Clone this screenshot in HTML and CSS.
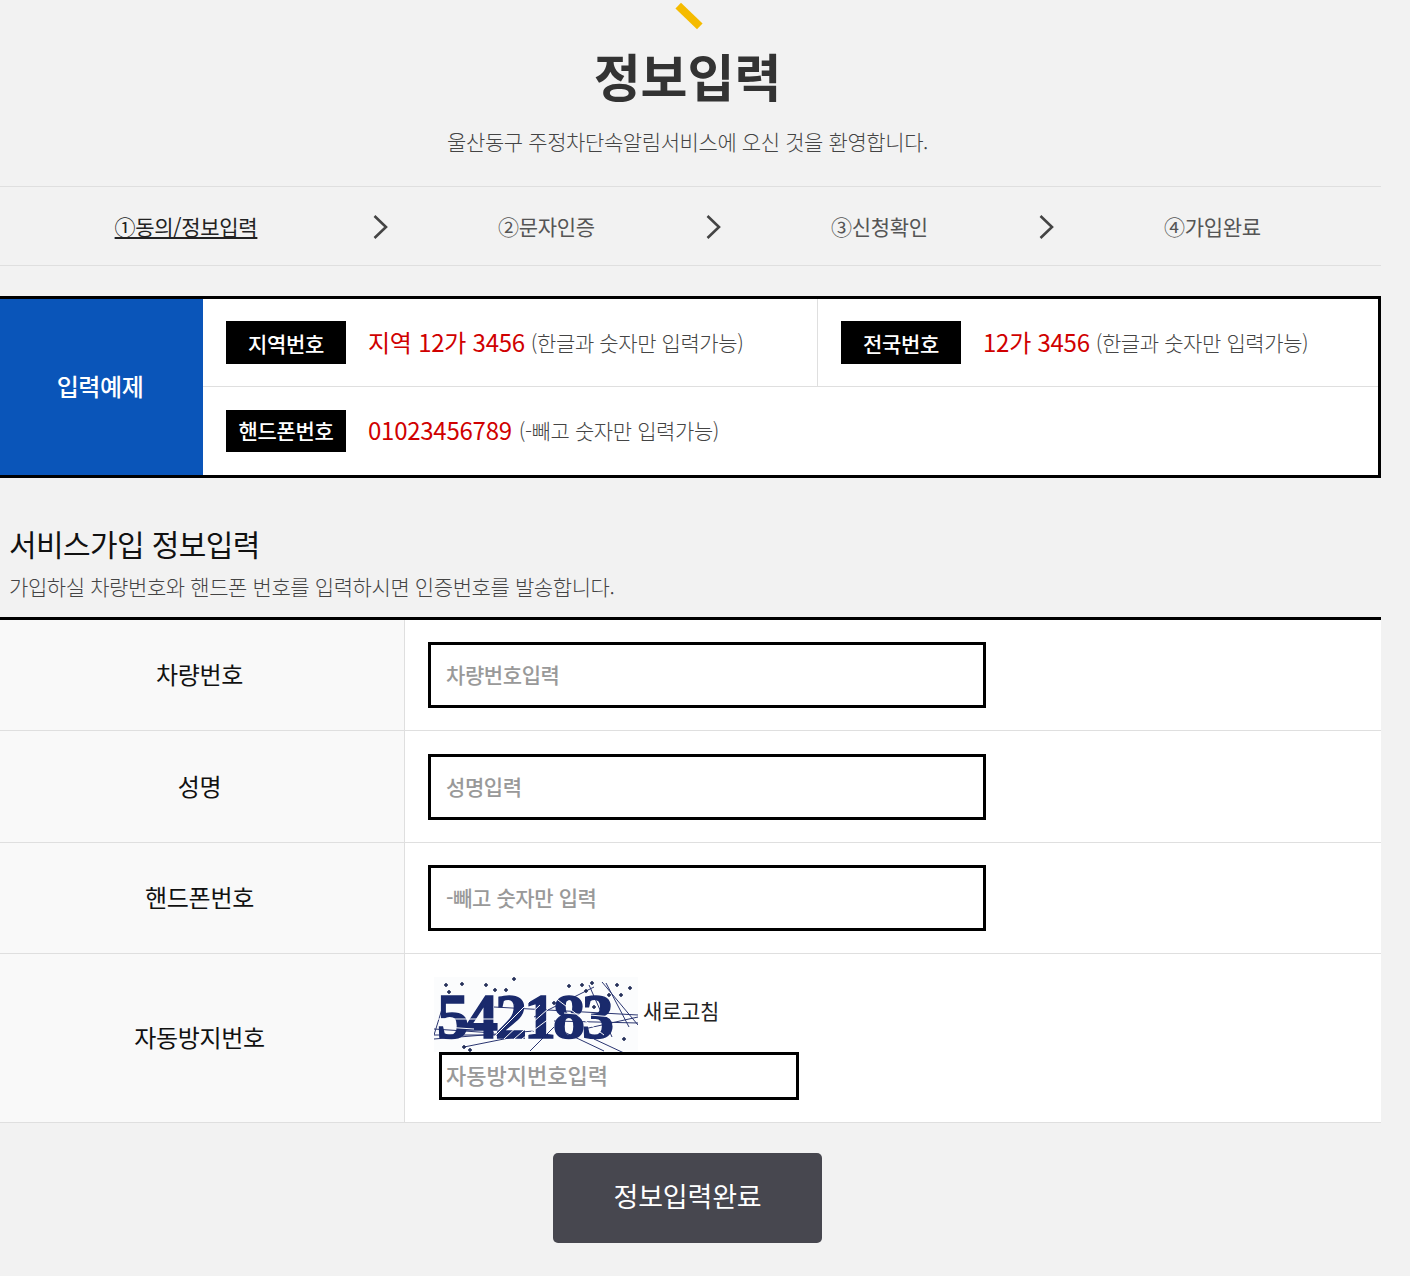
FILE: index.html
```html
<!DOCTYPE html>
<html lang="ko">
<head>
<meta charset="utf-8">
<title>정보입력</title>
<link rel="stylesheet" href="styles.css">
</head>
<body>
<main class="page">
  <header class="head">
    <span class="mark"></span>
    <h1 class="title">정보입력</h1>
    <p class="lead">울산동구 주정차단속알림서비스에 오신 것을 환영합니다.</p>
  </header>

  <nav class="steps">
    <a class="step step-on">①동의/정보입력</a>
    <svg class="chev" viewBox="0 0 16 26"><path d="M2.500 2 L14 13 L2.500 24"/></svg>
    <a class="step">②문자인증</a>
    <svg class="chev" viewBox="0 0 16 26"><path d="M2.500 2 L14 13 L2.500 24"/></svg>
    <a class="step">③신청확인</a>
    <svg class="chev" viewBox="0 0 16 26"><path d="M2.500 2 L14 13 L2.500 24"/></svg>
    <a class="step">④가입완료</a>
  </nav>

  <section class="example">
    <div class="ex-side">입력예제</div>
    <div class="ex-body">
      <div class="ex-row">
        <div class="ex-cell ex-cell-first">
          <span class="chip">지역번호</span>
          <span class="red">지역 12가 3456</span>
          <span class="note">(한글과 숫자만 입력가능)</span>
        </div>
        <div class="ex-cell">
          <span class="chip">전국번호</span>
          <span class="red">12가 3456</span>
          <span class="note">(한글과 숫자만 입력가능)</span>
        </div>
      </div>
      <div class="ex-row ex-row-last">
        <div class="ex-cell">
          <span class="chip">핸드폰번호</span>
          <span class="red">01023456789</span>
          <span class="note">(-빼고 숫자만 입력가능)</span>
        </div>
      </div>
    </div>
  </section>

  <h2 class="sec-title">서비스가입 정보입력</h2>
  <p class="sec-desc">가입하실 차량번호와 핸드폰 번호를 입력하시면 인증번호를 발송합니다.</p>

  <form class="form">
    <div class="f-row">
      <label class="f-label">차량번호</label>
      <div class="f-field"><input class="inp" type="text" placeholder="차량번호입력"></div>
    </div>
    <div class="f-row">
      <label class="f-label">성명</label>
      <div class="f-field"><input class="inp" type="text" placeholder="성명입력"></div>
    </div>
    <div class="f-row">
      <label class="f-label">핸드폰번호</label>
      <div class="f-field"><input class="inp" type="text" placeholder="-빼고 숫자만 입력"></div>
    </div>
    <div class="f-row f-row-cap">
      <label class="f-label">자동방지번호</label>
      <div class="f-field f-field-cap">
        <div class="cap-line">
          <svg class="captcha" viewBox="0 0 204 75">
            <rect width="204" height="75" fill="#fbfcfd"/>
            <g class="cap-lines">
              <path d="M0 58 H70 M0 52 L60 56 M0 62 L100 54 M8 32 L0 58 M100 40 L160 10 M168 5 L204 48 M155 8 L178 60 M172 6 L195 50 M60 30 L204 38 M120 44 L204 46 M150 52 L204 40 M30 70 L90 58 M96 74 L120 50 M160 62 L190 76 M130 55 L170 74"/>
            </g>
            <text class="cap-text" x="3" y="61">542183</text>
            <g class="cap-noise">
              <path d="M60 60 L98 22 M70 62 L106 28 M80 62 L114 32 M88 62 L120 38 M10 50 L40 52 M130 36 L180 40 M120 20 L170 58 M4 42 H70"/>
            </g>
            <g class="cap-dots">
              <path d="M12 6v4M10 8h4M28 5v4M26 7h4M15 13v4M13 15h4M52 6v4M50 8h4M61 11v4M59 13h4M72 11v4M70 13h4M80 0v4M78 2h4M135 7v4M133 9h4M148 6v4M146 8h4M158 4v4M156 6h4M152 12v4M150 14h4M183 6v4M181 8h4M175 16v4M173 18h4M196 9v4M194 11h4M187 16v4M185 18h4M30 68v4M28 70h4M36 71v4M34 73h4M190 60v4M188 62h4M120 24v4M118 26h4M160 28v4M158 30h4"/>
            </g>
          </svg>
          <a class="refresh">새로고침</a>
        </div>
        <input class="inp inp-cap" type="text" placeholder="자동방지번호입력">
      </div>
    </div>
  </form>

  <div class="actions">
    <button class="submit" type="button">정보입력완료</button>
  </div>
</main>
</body>
</html>
```

FILE: styles.css
```css
* { box-sizing: border-box; }
html, body { margin: 0; padding: 0; }
body {
  background: #f2f2f2;
  font-family: "Noto Sans CJK KR", "Noto Sans", sans-serif;
  color: #333;
}
.page { width: 1381px; height: 1276px; overflow: hidden; }

.head { display: flex; flex-direction: column; align-items: center; width: 1375px; height: 186px; }
.mark {
  display: block;
  width: 30px;
  height: 8px;
  margin-top: 12px;
  margin-left: 3px;
  background: #f5bb00;
  transform: rotate(44deg);
}
.title {
  margin: 18px 0 0;
  font-size: 51px;
  line-height: 74px;
  font-weight: 700;
  color: #333;
}
.lead {
  margin: 14px 0 0;
  font-size: 21px;
  line-height: 30px;
  font-weight: 300;
  color: #444;
  letter-spacing: -0.4px;
}

.steps {
  display: grid;
  grid-template-columns: 372px 16px 317px 16px 317px 16px 317px;
  align-items: center;
  justify-items: center;
  height: 80px;
  border-top: 1px solid #dfdfdf;
  border-bottom: 1px solid #dfdfdf;
}
.step { font-size: 21px; line-height: 30px; color: #555; letter-spacing: -0.3px; }
.step-on { color: #222; text-decoration: underline; }
.chev { width: 16px; height: 26px; margin-top: 1px; fill: none; stroke: #444; stroke-width: 2.6; }

.example {
  display: flex;
  height: 182px;
  margin-top: 30px;
  border: 3px solid #000;
  border-left: 0;
  background: #fff;
}
.ex-side {
  display: flex;
  align-items: center;
  justify-content: center;
  width: 203px;
  padding: 0 3px 4px 0;
  background: #0a55b9;
  color: #fff;
  font-size: 24px;
  font-weight: 500;
  letter-spacing: -0.4px;
}
.ex-body { flex: 1; display: flex; flex-direction: column; }
.ex-row { display: flex; height: 88px; border-bottom: 1px solid #dfdfdf; }
.ex-row-last { border-bottom: 0; }
.ex-cell { display: flex; align-items: center; padding-left: 23px; flex: 1; }
.ex-cell-first { flex: 0 0 615px; border-right: 1px solid #dfdfdf; }
.chip {
  display: flex;
  align-items: center;
  justify-content: center;
  flex: none;
  width: 120px;
  height: 43px;
  margin-right: 22px;
  background: #000;
  color: #fff;
  font-size: 21px;
  font-weight: 500;
  letter-spacing: -0.3px;
}
.red { margin-bottom: 2px; color: #d00000; font-size: 24px; letter-spacing: -0.25px; }
.note { margin: 0 0 2px 6px; font-size: 21px; font-weight: 300; color: #444; letter-spacing: -0.4px; }
.ex-row-last .chip { height: 42px; padding-bottom: 2px; }
.ex-row-last .red { margin-bottom: 4px; }
.ex-row-last .note { margin-left: 7px; }

.sec-title {
  margin: 43px 0 0 9px;
  font-size: 30px;
  line-height: 44px;
  font-weight: 400;
  color: #111;
  letter-spacing: -0.6px;
}
.sec-desc {
  margin: 6px 0 16px 9px;
  font-size: 21px;
  line-height: 30px;
  font-weight: 300;
  color: #444;
  letter-spacing: -0.4px;
}

.form { border-top: 3px solid #000; border-bottom: 1px solid #dfdfdf; }
.f-row { display: flex; height: 111.4px; border-bottom: 1px solid #dfdfdf; }
.f-row-cap { height: 168px; border-bottom: 0; }
.f-label {
  display: flex;
  align-items: center;
  justify-content: center;
  width: 405px;
  padding: 0 5px 3px 0;
  background: #f9f9f9;
  border-right: 1px solid #dfdfdf;
  font-size: 24px;
  letter-spacing: -0.3px;
  color: #111;
}
.f-field { flex: 1; display: flex; align-items: center; padding-left: 23px; background: #fff; }
.f-field-cap { flex-direction: column; align-items: flex-start; justify-content: flex-start; padding-top: 23px; padding-left: 29px; }
.inp {
  width: 558px;
  height: 66px;
  padding: 0 15px 2px;
  border: 3px solid #000;
  background: #fff;
  font: 500 21px "Noto Sans CJK KR", sans-serif;
  letter-spacing: -0.4px;
  color: #333;
  outline: 0;
  border-radius: 0;
}
.inp::placeholder { color: #999; opacity: 1; }
.inp-cap { width: 360px; height: 48px; margin-left: 5px; padding: 0 4px 4px; font-size: 22px; letter-spacing: 0; }
.cap-line { display: flex; align-items: center; height: 75px; }
.captcha { display: block; width: 204px; height: 75px; filter: blur(0.4px); }
.cap-lines path { fill: none; stroke: #2a3570; stroke-width: 1; }
.cap-text {
  font-family: "Liberation Serif", serif;
  font-size: 64px;
  font-weight: 700;
  fill: #1a2a6c;
  stroke: #1a2a6c;
  stroke-width: 1.5;
  letter-spacing: -3px;
}
.cap-noise path { fill: none; stroke: #fbfcfd; stroke-width: 1; }
.cap-dots path { fill: none; stroke: #1a2550; stroke-width: 1.5; }
.refresh { margin: 0 0 10px 5px; font-size: 21px; color: #222; letter-spacing: -0.3px; }

.actions { display: flex; justify-content: center; width: 1375px; margin-top: 30px; }
.submit {
  width: 269px;
  height: 90px;
  padding: 0 0 5px;
  border: 0;
  border-radius: 5px;
  background: #47474f;
  color: #fff;
  font: 400 27px "Noto Sans CJK KR", sans-serif;
  letter-spacing: -0.2px;
}
```
